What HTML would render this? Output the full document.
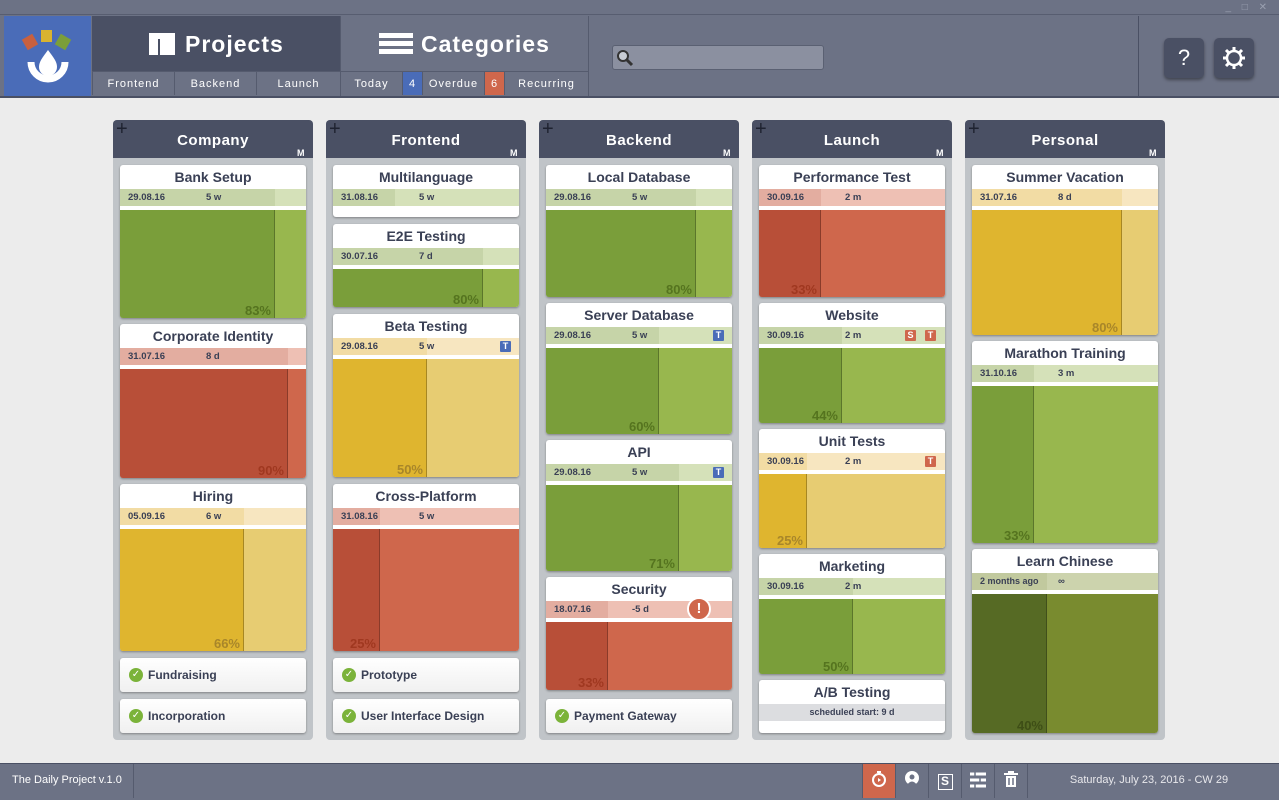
<!DOCTYPE html>
<html><head><meta charset="utf-8"><style>
*{margin:0;padding:0;box-sizing:border-box}
body{width:1279px;height:800px;overflow:hidden;background:#ececec;font-family:"Liberation Sans","DejaVu Sans",sans-serif;position:relative}
.abs{position:absolute}
#hdr{left:0;top:0;width:1279px;height:98px;background:#6c7285;border-bottom:2px solid #4a5064}
#hdr .tl{left:0;top:14px;width:1279px;height:1px;background:#575d70}
.tab{color:#fff;font-weight:bold;font-size:23px;letter-spacing:1px}
.sub{top:71px;height:24px;color:#fff;font-size:11px;letter-spacing:1px;text-align:center;line-height:24px;background:#6c7285;border-left:1px solid #555b6e;border-top:1px solid #555b6e}
.col{width:200px;top:120px;height:620px;background:#c0c4c8;border-radius:4px}
.ch{left:0;top:0;width:200px;height:38px;background:#4a5064;border-radius:4px 4px 0 0;color:#fff;font-weight:bold;font-size:15px;text-align:center;line-height:42px;letter-spacing:.5px}
.ch .p{position:absolute;left:3px;top:0;line-height:18px;font-size:20px;font-weight:normal;color:#1e2230}
.ch .m{position:absolute;right:8px;top:12px;font-size:9px}
.card{position:absolute;width:186px;background:#fff;border-radius:3px;box-shadow:0 1px 2px rgba(0,0,0,.35);overflow:hidden}
.t{height:24px;line-height:25px;text-align:center;font-size:14px;font-weight:bold;color:#3a4055}
.d{position:relative;height:17px;font-size:9.5px;font-weight:bold;color:#3a4055;line-height:17px}
.d .k{position:absolute;left:0;top:0;bottom:0}
.d .a{position:absolute;left:8px}
.d .w{position:absolute;left:86px}
.b{position:absolute;left:0;right:0;top:43px;bottom:0;border-top:2px solid #fff}
.b .k{position:absolute;left:0;top:0;bottom:0;border-right:1px solid rgba(0,0,0,.25)}
.b .pc{position:absolute;right:3px;bottom:0;font-weight:bold;font-size:13px}
.g .d{background:#d5e1b9}.g .d .k{background:#c6d4a8}.g .b{background:#98b74e}.g .b .k{background:#7a9e3a}.g .pc{color:#55741f}
.r .d{background:#eec0b4}.r .d .k{background:#e3ada0}.r .b{background:#cf674c}.r .b .k{background:#b84f38}.r .pc{color:#a03820}
.y .d{background:#f7e6c0}.y .d .k{background:#f2dca4}.y .b{background:#e7cc72}.y .b .k{background:#dfb52f}.y .pc{color:#a8862a}
.o .d{background:#ccd3ad}.o .d .k{background:#c1c99e}.o .b{background:#798b2f}.o .b .k{background:#566a24}.o .pc{color:#3e4e16}
.bdg{position:absolute;top:3px;width:11px;height:11px;color:#fff;font-size:9px;line-height:11px;text-align:center;border-radius:1px}
.done{position:absolute;width:186px;height:34px;background:linear-gradient(#fff,#f0f0f0);border-radius:3px;box-shadow:0 1px 2px rgba(0,0,0,.35);font-size:12px;font-weight:bold;color:#3a4055;line-height:34px;padding-left:28px}
.done:before{content:"✓";position:absolute;left:9px;top:10px;width:14px;height:14px;border-radius:7px;background:#7bb33a;color:#fff;font-size:10px;line-height:14px;text-align:center}
#ftr{left:0;top:763px;width:1279px;height:37px;background:#6c7285;border-top:1px solid #4a5064;color:#fff;font-size:11px}
.fi{top:0;height:34px;width:33px;border-left:1px solid #555b6e;color:#fff;text-align:center;line-height:34px;font-size:15px}
</style></head><body>
<div id="hdr" class="abs">
 <div class="abs tl"></div>
 <div class="abs" style="right:8px;top:2px;color:#9aa0b0;font-size:10px;letter-spacing:4px">_ □ ✕</div>
 <div class="abs" style="left:4px;top:16px;width:87px;height:80px;background:#4a6cb8">
  <div class="abs" style="left:20px;top:20px;width:12px;height:12px;background:#c8603e;transform:rotate(-30deg)"></div>
  <div class="abs" style="left:37px;top:14px;width:11px;height:12px;background:#d9b330"></div>
  <div class="abs" style="left:53px;top:20px;width:12px;height:12px;background:#7b9e3a;transform:rotate(30deg)"></div>
  <svg class="abs" style="left:22px;top:30px" width="44" height="44" viewBox="0 0 44 44"><path d="M22 4 C16 12 13 16 13 21 a9 9 0 0 0 18 0 C31 16 28 12 22 4Z" fill="#fff"/><path d="M5 16 a17 17 0 0 0 34 0" stroke="#fff" stroke-width="7" fill="none"/></svg>
 </div>
 <div class="abs" style="left:92px;top:16px;width:248px;height:55px;background:#4a5064"></div>
 <div class="abs tab" style="left:149px;top:31px"><span style="display:inline-block;width:26px;height:22px;border-top:6px solid #fff;vertical-align:-3px;margin-right:10px;background:linear-gradient(90deg,#fff 9px,transparent 9px,transparent 11px,#fff 11px)"></span>Projects</div>
 <div class="abs" style="left:340px;top:16px;width:1px;height:80px;background:#555b6e"></div>
 <div class="abs tab" style="left:379px;top:31px"><span style="display:inline-block;width:34px;height:22px;vertical-align:-3px;margin-right:8px;background:repeating-linear-gradient(#fff 0 5px,transparent 5px 8px)"></span>Categories</div>
 <div class="abs sub" style="left:92px;width:82px">Frontend</div>
 <div class="abs sub" style="left:174px;width:82px">Backend</div>
 <div class="abs sub" style="left:256px;width:84px">Launch</div>
 <div class="abs sub" style="left:340px;width:62px">Today</div>
 <div class="abs sub" style="left:402px;width:20px;background:#4a6cb8">4</div>
 <div class="abs sub" style="left:422px;width:62px">Overdue</div>
 <div class="abs sub" style="left:484px;width:20px;background:#cf674c">6</div>
 <div class="abs sub" style="left:504px;width:84px">Recurring</div>
 <div class="abs" style="left:588px;top:16px;width:1px;height:80px;background:#555b6e"></div>
 <div class="abs" style="left:612px;top:45px;width:212px;height:25px;background:#8b90a0;border:1px solid #5a6072;border-radius:3px">
  <svg class="abs" style="left:3px;top:3px" width="18" height="18"><circle cx="7" cy="7" r="5" stroke="#333" stroke-width="2" fill="#c8ccd4"/><path d="M11 11 L16 16" stroke="#333" stroke-width="3"/></svg>
 </div>
 <div class="abs" style="left:1138px;top:16px;width:1px;height:80px;background:#4a5064"></div>
 <div class="abs" style="left:1164px;top:38px;width:40px;height:40px;background:#4a5064;border-radius:5px;box-shadow:0 2px 3px rgba(0,0,0,.4);color:#fff;font-size:22px;text-align:center;line-height:40px">?</div>
 <div class="abs" style="left:1214px;top:38px;width:40px;height:40px;background:#4a5064;border-radius:5px;box-shadow:0 2px 3px rgba(0,0,0,.4)">
  <svg class="abs" style="left:8px;top:8px" width="24" height="24" viewBox="0 0 24 24"><circle cx="12" cy="12" r="7" stroke="#fff" stroke-width="2.5" fill="none"/><g stroke="#fff" stroke-width="3"><path d="M12 1v4M12 19v4M1 12h4M19 12h4M4 4l3 3M17 17l3 3M4 20l3-3M17 7l3-3"/></g></svg>
 </div>
</div>

<div class="abs col" style="left:113px"><div class="abs ch"><span class="p">+</span>Company<span class="m">M</span></div></div>
<div class="abs col" style="left:326px"><div class="abs ch"><span class="p">+</span>Frontend<span class="m">M</span></div></div>
<div class="abs col" style="left:539px"><div class="abs ch"><span class="p">+</span>Backend<span class="m">M</span></div></div>
<div class="abs col" style="left:752px"><div class="abs ch"><span class="p">+</span>Launch<span class="m">M</span></div></div>
<div class="abs col" style="left:965px"><div class="abs ch"><span class="p">+</span>Personal<span class="m">M</span></div></div>

<div class="card g" style="left:120px;top:165px;height:153px"><div class="t">Bank Setup</div><div class="d"><div class="k" style="width:155px"></div><span class="a">29.08.16</span><span class="w">5 w</span></div><div class="b"><div class="k" style="width:155px"><span class="pc">83%</span></div></div></div>
<div class="card r" style="left:120px;top:324px;height:154px"><div class="t">Corporate Identity</div><div class="d"><div class="k" style="width:168px"></div><span class="a">31.07.16</span><span class="w">8 d</span></div><div class="b"><div class="k" style="width:168px"><span class="pc">90%</span></div></div></div>
<div class="card y" style="left:120px;top:484px;height:167px"><div class="t">Hiring</div><div class="d"><div class="k" style="width:124px"></div><span class="a">05.09.16</span><span class="w">6 w</span></div><div class="b"><div class="k" style="width:124px"><span class="pc">66%</span></div></div></div>
<div class="done" style="left:120px;top:658px">Fundraising</div>
<div class="done" style="left:120px;top:699px">Incorporation</div>

<div class="card g" style="left:333px;top:165px;height:52px"><div class="t">Multilanguage</div><div class="d"><div class="k" style="width:62px"></div><span class="a">31.08.16</span><span class="w">5 w</span></div></div>
<div class="card g" style="left:333px;top:224px;height:83px"><div class="t">E2E Testing</div><div class="d"><div class="k" style="width:150px"></div><span class="a">30.07.16</span><span class="w">7 d</span></div><div class="b"><div class="k" style="width:150px"><span class="pc">80%</span></div></div></div>
<div class="card y" style="left:333px;top:314px;height:163px"><div class="t">Beta Testing</div><div class="d"><div class="k" style="width:94px"></div><span class="a">29.08.16</span><span class="w">5 w</span><span class="bdg" style="right:8px;background:#4a6cb8">T</span></div><div class="b"><div class="k" style="width:94px"><span class="pc">50%</span></div></div></div>
<div class="card r" style="left:333px;top:484px;height:167px"><div class="t">Cross-Platform</div><div class="d"><div class="k" style="width:47px"></div><span class="a">31.08.16</span><span class="w">5 w</span></div><div class="b"><div class="k" style="width:47px"><span class="pc">25%</span></div></div></div>
<div class="done" style="left:333px;top:658px">Prototype</div>
<div class="done" style="left:333px;top:699px">User Interface Design</div>

<div class="card g" style="left:546px;top:165px;height:132px"><div class="t">Local Database</div><div class="d"><div class="k" style="width:150px"></div><span class="a">29.08.16</span><span class="w">5 w</span></div><div class="b"><div class="k" style="width:150px"><span class="pc">80%</span></div></div></div>
<div class="card g" style="left:546px;top:303px;height:131px"><div class="t">Server Database</div><div class="d"><div class="k" style="width:113px"></div><span class="a">29.08.16</span><span class="w">5 w</span><span class="bdg" style="right:8px;background:#4a6cb8">T</span></div><div class="b"><div class="k" style="width:113px"><span class="pc">60%</span></div></div></div>
<div class="card g" style="left:546px;top:440px;height:131px"><div class="t">API</div><div class="d"><div class="k" style="width:133px"></div><span class="a">29.08.16</span><span class="w">5 w</span><span class="bdg" style="right:8px;background:#4a6cb8">T</span></div><div class="b"><div class="k" style="width:133px"><span class="pc">71%</span></div></div></div>
<div class="card r" style="left:546px;top:577px;height:113px;overflow:visible"><div class="t">Security</div><div class="d"><div class="k" style="width:62px"></div><span class="a">18.07.16</span><span class="w">-5 d</span><span style="position:absolute;left:141px;top:-4px;width:24px;height:24px;border-radius:12px;background:#cf674c;border:2px solid #fff;color:#fff;font-size:15px;text-align:center;line-height:20px;z-index:2">!</span></div><div class="b" style="border-radius:0 0 3px 3px;overflow:hidden"><div class="k" style="width:62px"><span class="pc">33%</span></div></div></div>
<div class="done" style="left:546px;top:699px">Payment Gateway</div>

<div class="card r" style="left:759px;top:165px;height:132px"><div class="t">Performance Test</div><div class="d"><div class="k" style="width:62px"></div><span class="a">30.09.16</span><span class="w">2 m</span></div><div class="b"><div class="k" style="width:62px"><span class="pc">33%</span></div></div></div>
<div class="card g" style="left:759px;top:303px;height:120px"><div class="t">Website</div><div class="d"><div class="k" style="width:83px"></div><span class="a">30.09.16</span><span class="w">2 m</span><span class="bdg" style="right:29px;background:#cf674c">S</span><span class="bdg" style="right:9px;background:#cf674c">T</span></div><div class="b"><div class="k" style="width:83px"><span class="pc">44%</span></div></div></div>
<div class="card y" style="left:759px;top:429px;height:119px"><div class="t">Unit Tests</div><div class="d"><div class="k" style="width:48px"></div><span class="a">30.09.16</span><span class="w">2 m</span><span class="bdg" style="right:9px;background:#cf674c">T</span></div><div class="b"><div class="k" style="width:48px"><span class="pc">25%</span></div></div></div>
<div class="card g" style="left:759px;top:554px;height:120px"><div class="t">Marketing</div><div class="d"><div class="k" style="width:94px"></div><span class="a">30.09.16</span><span class="w">2 m</span></div><div class="b"><div class="k" style="width:94px"><span class="pc">50%</span></div></div></div>
<div class="card" style="left:759px;top:680px;height:53px"><div class="t">A/B Testing</div><div class="d" style="background:#dcdde0;text-align:center;font-size:9px">scheduled start: 9 d</div></div>

<div class="card y" style="left:972px;top:165px;height:170px"><div class="t">Summer Vacation</div><div class="d"><div class="k" style="width:150px"></div><span class="a">31.07.16</span><span class="w">8 d</span></div><div class="b"><div class="k" style="width:150px"><span class="pc">80%</span></div></div></div>
<div class="card g" style="left:972px;top:341px;height:202px"><div class="t">Marathon Training</div><div class="d"><div class="k" style="width:62px"></div><span class="a">31.10.16</span><span class="w">3 m</span></div><div class="b"><div class="k" style="width:62px"><span class="pc">33%</span></div></div></div>
<div class="card o" style="left:972px;top:549px;height:184px"><div class="t">Learn Chinese</div><div class="d"><div class="k" style="width:75px"></div><span class="a" style="font-size:9px">2 months ago</span><span class="w">∞</span></div><div class="b"><div class="k" style="width:75px"><span class="pc">40%</span></div></div></div>

<div id="ftr" class="abs">
 <div class="abs" style="left:12px;top:10px">The Daily Project v.1.0</div>
 <div class="abs" style="left:133px;top:0;width:1px;height:34px;background:#555b6e"></div>
 <div class="abs fi" style="left:862px;background:#cf674c"><svg width="18" height="18" viewBox="0 0 18 18" style="vertical-align:-3px"><circle cx="9" cy="10" r="6" stroke="#fff" stroke-width="2" fill="none"/><path d="M7 2h4M9 2v2" stroke="#fff" stroke-width="2"/><path d="M8 8l3 2-3 2z" fill="#fff"/></svg></div>
 <div class="abs fi" style="left:895px"><svg width="18" height="18" viewBox="0 0 18 18" style="vertical-align:-3px"><circle cx="9" cy="8" r="7" fill="#fff"/><circle cx="9" cy="7" r="2.5" fill="#6c7285"/><path d="M4 15 q5-7 10 0" fill="#6c7285"/></svg></div>
 <div class="abs fi" style="left:928px"><span style="display:inline-block;width:15px;height:16px;border:1.5px solid #fff;font-size:12px;line-height:13px;font-weight:bold">S</span></div>
 <div class="abs fi" style="left:961px"><svg width="18" height="16" viewBox="0 0 18 16" style="vertical-align:-3px"><path d="M1 2h16M1 8h16M1 14h16" stroke="#fff" stroke-width="3"/><path d="M6 0v4M11 6v4M6 12v4" stroke="#6c7285" stroke-width="1.5"/></svg></div>
 <div class="abs fi" style="left:994px"><svg width="16" height="18" viewBox="0 0 16 18" style="vertical-align:-3px"><path d="M1 4h14M6 4V2h4v2" stroke="#fff" stroke-width="2" fill="none"/><path d="M3 6h10v11H3z" fill="#fff"/><path d="M6 8v7M10 8v7" stroke="#6c7285" stroke-width="1.5"/></svg></div>
 <div class="abs" style="left:1027px;top:0;width:1px;height:34px;background:#555b6e"></div>
 <div class="abs" style="left:1028px;width:242px;top:10px;text-align:center;color:#e8e8ec">Saturday, July 23, 2016 - CW 29</div>
</div>
</body></html>
